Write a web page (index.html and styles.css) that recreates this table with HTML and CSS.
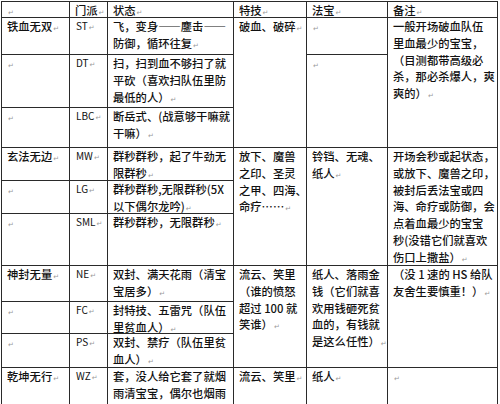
FILE: index.html
```html
<!DOCTYPE html>
<html lang="zh-CN">
<head>
<meta charset="utf-8">
<title>宝宝门派表</title>
<link rel="stylesheet" href="styles.css">
</head>
<body>
<div class="sheet">
  <div class="cell"><span class="pm">↵</span></div>
  <div class="cell">门派<span class="pm">↵</span></div>
  <div class="cell">状态<span class="pm">↵</span></div>
  <div class="cell">特技<span class="pm">↵</span></div>
  <div class="cell">法宝<span class="pm">↵</span></div>
  <div class="cell">备注<span class="pm">↵</span></div>

  <div class="cell">铁血无双<span class="pm">↵</span></div>
  <div class="cell code">ST<span class="pm">↵</span></div>
  <div class="cell">飞，变身——鏖击——<br>防御，循环往复<span class="pm">↵</span></div>
  <div class="cell span3">破血、破碎<span class="pm">↵</span></div>
  <div class="cell"><span class="pm">↵</span></div>
  <div class="cell span3">一般开场破血队伍<br>里血最少的宝宝，<br>（目测都带高级必<br>杀，那必杀爆人，爽<br>爽的）<span class="pm">↵</span></div>

  <div class="cell"><span class="pm">↵</span></div>
  <div class="cell code">DT<span class="pm">↵</span></div>
  <div class="cell">扫，扫到血不够扫了就<br>平砍（喜欢扫队伍里防<br>最低的人）<span class="pm">↵</span></div>
  <div class="cell span2"><span class="pm">↵</span></div>

  <div class="cell"><span class="pm">↵</span></div>
  <div class="cell code">LBC<span class="pm">↵</span></div>
  <div class="cell">断岳式、(战意够干嘛就<br>干嘛）<span class="pm">↵</span></div>

  <div class="cell">玄法无边<span class="pm">↵</span></div>
  <div class="cell code">MW<span class="pm">↵</span></div>
  <div class="cell">群秒群秒，起了牛劲无<br>限群秒<span class="pm">↵</span></div>
  <div class="cell span3">放下、魔兽<br>之印、圣灵<br>之甲、四海、<br>命疗……<span class="pm">↵</span></div>
  <div class="cell span3">铃铛、无魂、<br>纸人<span class="pm">↵</span></div>
  <div class="cell span3">开场会秒或起状态，<br>或放下、魔兽之印，<br>被封后丢法宝或四<br>海、命疗或防御，会<br>点着血最少的宝宝<br>秒(没错它们就喜欢<br>伤口上撒盐）<span class="pm">↵</span></div>

  <div class="cell"><span class="pm">↵</span></div>
  <div class="cell code">LG<span class="pm">↵</span></div>
  <div class="cell">群秒群秒,无限群秒(5X<br>以下偶尔龙吟)<span class="pm">↵</span></div>

  <div class="cell"><span class="pm">↵</span></div>
  <div class="cell code">SML<span class="pm">↵</span></div>
  <div class="cell">群秒群秒，无限群秒<span class="pm">↵</span></div>

  <div class="cell">神封无量<span class="pm">↵</span></div>
  <div class="cell code">NE<span class="pm">↵</span></div>
  <div class="cell">双封、满天花雨（清宝<br>宝居多）<span class="pm">↵</span></div>
  <div class="cell span3">流云、笑里<br>（谁的愤怒<br>超过 100 就<br>笑谁）<span class="pm">↵</span></div>
  <div class="cell span3">纸人、落雨金<br>钱（它们就喜<br>欢用钱砸死贫<br>血的，有钱就<br>是这么任性）<span class="pm">↵</span></div>
  <div class="cell span3">（没 1 速的 HS 给队<br>友舍生要慎重！）<span class="pm">↵</span></div>

  <div class="cell"><span class="pm">↵</span></div>
  <div class="cell code">FC<span class="pm">↵</span></div>
  <div class="cell">封特技、五雷咒（队伍<br>里贫血人）<span class="pm">↵</span></div>

  <div class="cell"><span class="pm">↵</span></div>
  <div class="cell code">PS<span class="pm">↵</span></div>
  <div class="cell">双封、禁疗（队伍里贫<br>血人）<span class="pm">↵</span></div>

  <div class="cell">乾坤无行<span class="pm">↵</span></div>
  <div class="cell code">WZ<span class="pm">↵</span></div>
  <div class="cell">套，没人给它套了就烟<br>雨清宝宝，偶尔也烟雨</div>
  <div class="cell">流云、笑里<span class="pm">↵</span></div>
  <div class="cell">纸人<span class="pm">↵</span></div>
  <div class="cell"><span class="pm">↵</span></div>
</div>
</body>
</html>
```

FILE: styles.css
```css
html, body {
  margin: 0;
  padding: 0;
  background: #ffffff;
}

body {
  width: 500px;
  height: 404px;
  overflow: hidden;
  padding: 1px 0 0 1px;
  box-sizing: border-box;
  font-family: "Noto Sans CJK SC", "Noto Sans", sans-serif;
  color: #111111;
}

.sheet {
  display: grid;
  grid-template-columns: 68px 38px 126px 73px 81px 110px;
  grid-template-rows: 16px 37px 53px 40px 33px 33px 52px 36px 32px 34px 60px;
  width: 497px;
  box-sizing: border-box;
  border-left: 1px solid #2a2a2a;
  border-top: 1px solid #2a2a2a;
}

.cell {
  box-sizing: border-box;
  border-right: 1px solid #2a2a2a;
  border-bottom: 1px solid #2a2a2a;
  padding: 0 2px 0 5px;
  font-size: 11.3px;
  font-weight: 500;
  line-height: 16.8px;
  white-space: nowrap;
  overflow: hidden;
}

.code {
  font-size: 10px;
  font-weight: 400;
  padding-left: 6px;
}

.span2 {
  grid-row: span 2;
}

.span3 {
  grid-row: span 3;
}

.pm {
  font-family: "DejaVu Sans", sans-serif;
  font-size: 7px;
  font-weight: 400;
  color: #9a9a9a;
  margin-left: 1px;
}
```
